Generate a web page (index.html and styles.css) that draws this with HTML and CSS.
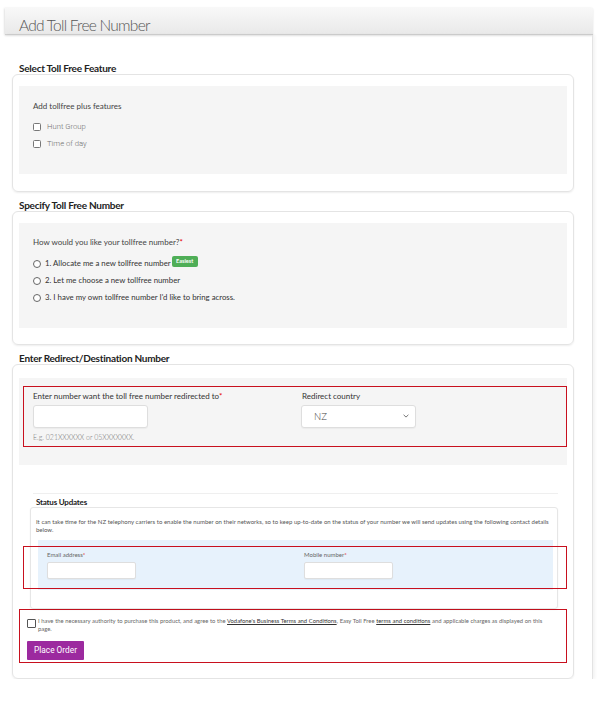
FILE: index.html
```html
<!DOCTYPE html>
<html>
<head>
<meta charset="utf-8">
<title>Add Toll Free Number</title>
<link rel="stylesheet" href="styles.css">
</head>
<body>
<div class="page">
  <div class="header"><h1 class="title">Add Toll Free Number</h1></div>
  <div class="content">
    <section class="sec">
      <h2 class="sec-title">Select Toll Free Feature</h2>
      <div class="box box1">
        <div class="panel p1">
          <div class="q">Add tollfree plus features</div>
          <ul class="opts">
            <li class="opt"><span class="cb"></span><span class="cb-label">Hunt Group</span></li>
            <li class="opt"><span class="cb"></span><span class="cb-label">Time of day</span></li>
          </ul>
        </div>
      </div>
    </section>

    <section class="sec">
      <h2 class="sec-title">Specify Toll Free Number</h2>
      <div class="box box2">
        <div class="panel p2">
          <div class="q">How would you like your tollfree number?<span class="req">*</span></div>
          <ul class="radios">
            <li class="ropt"><span class="rb"></span><span class="r-label">1. Allocate me a new tollfree number</span><span class="badge">Easiest</span></li>
            <li class="ropt"><span class="rb"></span><span class="r-label">2. Let me choose a new tollfree number</span></li>
            <li class="ropt"><span class="rb"></span><span class="r-label">3. I have my own tollfree number I'd like to bring across.</span></li>
          </ul>
        </div>
      </div>
    </section>

    <section class="sec">
      <h2 class="sec-title">Enter Redirect/Destination Number</h2>
      <div class="box box3">
        <div class="panel p3">
          <div class="mark mark1">
            <div class="field">
              <div class="lbl">Enter number want the toll free number redirected to<span class="req">*</span></div>
              <div class="input big"></div>
              <div class="help">E.g. 021XXXXXX or 05XXXXXXX.</div>
            </div>
            <div class="field">
              <div class="lbl">Redirect country</div>
              <div class="input big select"><span class="sel-val">NZ</span>
                <svg class="chev" width="6" height="4" viewBox="0 0 6 4"><path d="M0.6 0.8 L3 3.1 L5.4 0.8" fill="none" stroke="#666" stroke-width="0.9"/></svg>
              </div>
            </div>
          </div>
        </div>

        <div class="status-line"></div>
        <div class="status">
          <div class="status-title">Status Updates</div>
          <div class="status-box">
            <p class="status-text"><span class="ln">It can take time for the NZ telephony carriers to enable the number on their networks, so to keep up-to-date on the status of your number we will send updates using the following contact details</span><br><span class="ln">below.</span></p>
            <div class="blue">
              <div class="field">
                <div class="lbl sm">Email address<span class="req">*</span></div>
                <div class="input small"></div>
              </div>
              <div class="field">
                <div class="lbl sm">Mobile number<span class="req">*</span></div>
                <div class="input small"></div>
              </div>
            </div>
            <div class="mark mark2"></div>
          </div>
        </div>

        <div class="mark mark3">
          <div class="consent">
            <span class="cb2"></span>
            <p class="consent-text">I have the necessary authority to purchase this product, and agree to the <a class="lnk">Vodafone's Business Terms and Conditions</a>, Easy Toll Free <a class="lnk">terms and conditions</a> and applicable charges as displayed on this<br><span>page.</span></p>
          </div>
          <button class="btn">Place Order</button>
        </div>
      </div>
    </section>
  </div>
</div>
</body>
</html>
```
FILE: styles.css
```css
* { box-sizing: border-box; }
html, body { margin: 0; padding: 0; background: #fff; }
body { font-family: Lato, "Open Sans", sans-serif; color: #333; }

.page { width: 588px; margin-left: 5px; padding-top: 8px; }

.header {
  height: 27px;
  background: linear-gradient(#f8f8f8, #e9e9e9);
  border-bottom: 1px solid #cfcfcf;
  box-shadow: -1px 0 2px rgba(0,0,0,0.08), 0 1px 2px rgba(0,0,0,0.10);
}
.title {
  margin: 0;
  padding: 7px 0 0 14px;
  font-size: 15.5px;
  line-height: 20px;
  font-weight: 300;
  color: #555;
  letter-spacing: -0.75px;
}

.content {
  padding: 27px 18px 0 7px;
  border-right: 1px solid #e3e3e3;
  box-shadow: 2px 0 3px rgba(0,0,0,0.05);
}

.sec + .sec { margin-top: 7px; }
.sec-title {
  margin: 0;
  padding-left: 7px;
  font-size: 10px;
  line-height: 12px;
  font-weight: 700;
  color: #222;
  letter-spacing: -0.25px;
}

.box {
  border: 1px solid #e4e4e4;
  border-radius: 6px;
  box-shadow: 0 1px 2px rgba(0,0,0,0.07);
  padding: 11px 6px 17px;
}
.box2 { padding-bottom: 16px; }
.box3 { padding-top: 13px; padding-bottom: 15px; }

.panel { background: #f5f5f5; }
.p1 { padding: 14.5px 14px 22.5px; }
.p2 { padding: 14.3px 14px 22.5px; }
.p3 { padding: 8px 0 18px 4px; }

.q { font-size: 8px; line-height: 10px; color: #444; }
.req { color: #e60000; }

.opts, .radios { list-style: none; margin: 0; padding: 0; }
.opts { margin-top: 7px; }
.radios { margin-top: 7.2px; }

.opt { height: 17px; display: flex; align-items: center; }
.cb {
  width: 8px; height: 8px;
  border: 1px solid #777;
  border-radius: 1.5px;
  background: #fff;
  margin-top: 2px;
}
.cb-label {
  margin-left: 6px;
  font-family: Roboto, sans-serif;
  font-weight: 300;
  font-size: 7.7px;
  color: #707070;
}

.ropt { height: 17px; display: flex; align-items: center; }
.rb {
  width: 8px; height: 8px;
  border: 1px solid #666;
  border-radius: 50%;
  background: #fff;
  margin-top: 2px;
}
.r-label { margin-left: 4px; font-size: 7.8px; color: #333; }
.badge {
  margin-left: 1px;
  width: 26px; height: 11px;
  background: #4fae57;
  border-radius: 2px;
  color: #fff;
  font-size: 5.5px;
  font-weight: 700;
  line-height: 11px;
  text-align: center;
  margin-top: -3px;
}

.mark { border: 1px solid #c8101e; }
.mark1 {
  display: grid;
  grid-template-columns: 269px 1fr;
  padding: 4px 0 4px 9px;
}
.lbl { font-size: 8px; line-height: 10px; color: #333; }
.input {
  background: #fff;
  border: 1px solid #dedede;
  border-radius: 3px;
  box-shadow: 0 1px 1px rgba(0,0,0,0.04);
}
.input.big { width: 115px; height: 23px; margin-top: 4px; }
.help { margin-top: 4px; font-size: 7px; line-height: 10px; color: #777; font-weight: 300; }
.select {
  display: flex; align-items: center; justify-content: space-between;
  padding: 0 6px 0 12px;
  margin-left: -1px;
}
.sel-val { font-size: 9.5px; color: #444; font-weight: 300; }
.chev { display: block; }

.status-line { margin: 28px 9px 0 14px; border-top: 1px solid #efefef; }
.status { margin: 0 9px 0 11px; }
.status-title {
  padding: 3px 0 0 6px;
  font-size: 8px; line-height: 10px; font-weight: 700; color: #222;
  letter-spacing: -0.2px;
}
.status-box {
  position: relative;
  border: 1px solid #e6e6e6;
  border-radius: 3px;
  box-shadow: 0 1px 2px rgba(0,0,0,0.05);
  padding: 9.75px 4px 18px 5px;
}
.status-text { margin: 0; font-size: 6px; line-height: 8.5px; color: #555; word-spacing: 0.1px; white-space: nowrap; }
.blue {
  margin: 5.25px 0 0 2px;
  background: #e7f2fc;
  display: grid;
  grid-template-columns: 257px 1fr;
  padding: 10px 0 11px 9px;
}
.lbl.sm { font-size: 6px; color: #666; }
.input.small { width: 89px; height: 17px; margin-top: 2px; border-radius: 2px; }
.mark2 {
  position: absolute;
  top: 38px; left: -8px; right: -10px;
  height: 43px;
}

.mark3 { padding: 7px 0 2px 7px; }
.consent { display: flex; align-items: flex-start; }
.cb2 {
  flex: none;
  width: 9px; height: 9px;
  border: 1px solid #555;
  border-radius: 1px;
  margin-top: 2px;
  background: #fff;
}
.consent-text {
  margin: 0 0 0 2px;
  width: 516px;
  font-size: 5.85px;
  line-height: 8px;
  word-spacing: 0.2px;
  white-space: nowrap;
  color: #666;
}
.lnk { color: #333; text-decoration: underline; }
.btn {
  display: block;
  margin-top: 8px;
  width: 57px; height: 19px;
  border: 0; border-radius: 1px;
  background: #9c2a9f;
  color: #fff;
  font-family: Roboto, sans-serif;
  font-size: 8.3px;
  padding: 0;
}
```
